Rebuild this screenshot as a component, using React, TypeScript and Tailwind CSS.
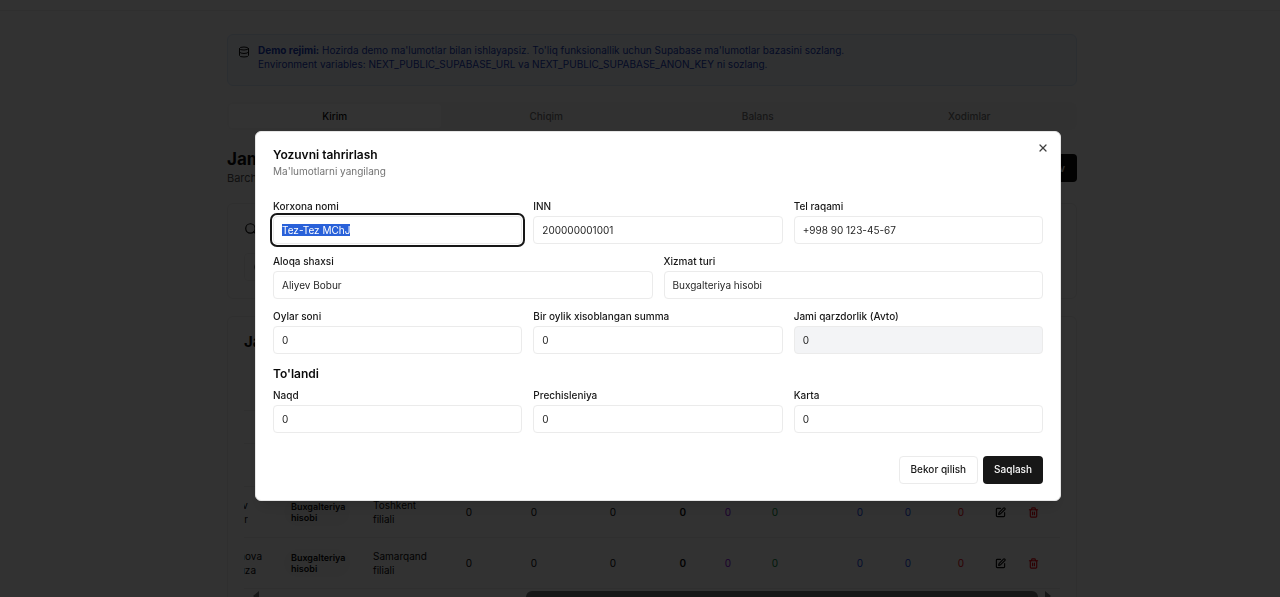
import { useEffect, useRef } from "react";
import { Database, Search, X, SquarePen, Trash2 } from "lucide-react";

type FieldProps = {
  id: string;
  label: string;
  value: string;
  readOnly?: boolean;
  selected?: boolean;
};

function Field({ id, label, value, readOnly, selected }: FieldProps) {
  const ref = useRef<HTMLInputElement>(null);
  useEffect(() => {
    if (selected) {
      ref.current?.focus();
      ref.current?.select();
    }
  }, [selected]);
  return (
    <div className="flex min-w-0 flex-col gap-[3px]">
      <label htmlFor={id} className="text-[10px] font-medium leading-[14px] text-neutral-900">
        {label}
      </label>
      <input
        id={id}
        ref={ref}
        defaultValue={value}
        readOnly={readOnly}
        className="h-7 w-full rounded border border-[#ebebeb] bg-white px-2 text-[10px] text-neutral-800 outline-neutral-900 selection:bg-[#2961d9] selection:text-white read-only:bg-gray-100 focus:outline-2 focus:outline-offset-1"
      />
    </div>
  );
}

const tabs = ["Kirim", "Chiqim", "Balans", "Xodimlar"];

const rows = [
  { first: "Aliyev", last: "Bobur", clip: "w-1", inset: "", branch: "Toshkent filiali" },
  { first: "Usmonova", last: "Feruza", clip: "w-[18px]", inset: "pr-[6px]", branch: "Samarqand filiali" },
];

const amounts = [
  "w-[29px] text-neutral-950",
  "w-[65px] text-neutral-950",
  "w-[79px] text-neutral-950",
  "w-[70px] font-semibold text-neutral-950",
  "w-[45px] text-purple-700",
  "w-[47px] text-green-700",
  "w-[85px] text-blue-700",
  "w-[48px] text-blue-700",
  "w-[53px] text-red-600",
];

function Page() {
  return (
    <div className="h-screen overflow-hidden bg-[#fafafa] pl-6">
      <div className="-ml-6 h-[11px] border-b border-[#ebebeb]" />
      <main className="mx-auto max-w-[850px] pt-[23px]">
        <div className="flex gap-2 rounded-md border border-[#d5e4f5] bg-[#eff5fb] px-[10px] pt-2 pb-3">
          <Database className="mt-[3px] size-3 shrink-0 text-neutral-950" />
          <p className="pb-[2px] text-[10px] leading-[14px] text-blue-800">
            <strong className="font-bold">Demo rejimi:</strong> Hozirda demo ma'lumotlar bilan ishlayapsiz. To'liq
            funksionallik uchun Supabase ma'lumotlar bazasini sozlang.
            <br />
            Environment variables: NEXT_PUBLIC_SUPABASE_URL va NEXT_PUBLIC_SUPABASE_ANON_KEY ni sozlang.
          </p>
        </div>

        <div role="tablist" className="mt-4 grid grid-cols-4 rounded-md bg-neutral-100 p-[2px]">
          {tabs.map((tab, i) => (
            <button
              key={tab}
              role="tab"
              aria-selected={i === 0}
              className="h-6 rounded text-[10px] font-medium text-neutral-500 aria-selected:bg-white aria-selected:text-neutral-950"
            >
              {tab}
            </button>
          ))}
        </div>

        <div className="mt-[19px] flex items-center justify-between">
          <div>
            <h2 className="text-[17px] leading-5 font-bold text-neutral-950">Jami kirimlar</h2>
            <p className="text-[11px] leading-[18px] text-neutral-600">Barcha kirim yozuvlari</p>
          </div>
          <button className="h-7 rounded bg-neutral-950 px-3 text-[10px] font-medium text-white">Yangi yozuv</button>
        </div>

        <section className="mt-4 rounded-md border border-[#ebebeb] px-4 pt-[18px] pb-[17px]">
          <Search className="size-[14px] text-neutral-950" />
          <div className="mt-[17px] h-7 rounded border border-[#ebebeb] px-2 py-2">
            <Search className="size-[11px] text-neutral-500" />
          </div>
        </section>

        <section className="mt-[17px] rounded-md border border-[#ebebeb] px-4 pt-[15px]">
          <h3 className="text-[15px] leading-5 font-bold text-neutral-950">Jami yozuvlar</h3>
          <div className="mt-[58px] overflow-hidden">
            <table className="w-full table-fixed border-collapse text-[10px] leading-[14px]">
              <thead>
                <tr className="h-[33px] border-y border-[#ebebeb]">
                  <th className="w-[30px]" />
                  <th className="w-[89px]" />
                  <th className="w-[83px]" />
                  {amounts.map((cell, i) => (
                    <th key={i} className={cell} />
                  ))}
                  <th />
                </tr>
              </thead>
              <tbody>
                <tr className="h-[43px] border-b border-[#ebebeb]">
                  <td colSpan={13} />
                </tr>
                {rows.map(({ first, last, clip, inset, branch }) => (
                  <tr key={branch} className="h-[51px] border-b border-[#ebebeb] text-neutral-950">
                    <td className="overflow-hidden">
                      <div className={clip + " flex flex-col items-end overflow-hidden"}>
                        <span>{first}</span>
                        <span className={inset}>{last}</span>
                      </div>
                    </td>
                    <td className="pl-[10px]">
                      <span className="block w-[66px] rounded-full bg-neutral-100 px-[7px] py-[3px] text-[9px] leading-[11px] font-semibold">
                        Buxgalteriya hisobi
                      </span>
                    </td>
                    <td className="pl-[10px]">
                      <span className="block w-[54px]">{branch}</span>
                    </td>
                    {amounts.map((cell, i) => (
                      <td key={i} className={cell + " pr-[3px] text-right"}>
                        0
                      </td>
                    ))}
                    <td>
                      <div className="flex justify-end gap-[22px] pr-[21px]">
                        <button aria-label="Tahrirlash">
                          <SquarePen className="size-[11px]" strokeWidth={2.5} />
                        </button>
                        <button aria-label="O'chirish" className="text-red-600">
                          <Trash2 className="size-[11px]" strokeWidth={2.5} />
                        </button>
                      </div>
                    </td>
                  </tr>
                ))}
              </tbody>
            </table>
            <div className="mt-[2px] flex h-3 items-start justify-between px-2">
              <svg viewBox="0 0 8 10" className="h-[10px] w-2 fill-neutral-500">
                <path d="M7 0v10L1 5z" />
              </svg>
              <div className="mr-[6px] ml-auto h-3 w-[64%] shrink-0 rounded-full bg-neutral-500" />
              <svg viewBox="0 0 8 10" className="h-[10px] w-2 fill-neutral-500">
                <path d="M1 0v10l6-5z" />
              </svg>
            </div>
          </div>
        </section>
      </main>
    </div>
  );
}

function EditDialog() {
  return (
    <div className="fixed inset-0 flex items-center justify-center bg-black/80 pt-[35px] pl-9">
      <div
        role="dialog"
        aria-modal="true"
        aria-labelledby="dialog-title"
        className="relative w-full max-w-[806px] rounded-md border border-neutral-200 bg-white px-[17px] pt-[15px] pb-4 shadow-lg"
      >
        <h2 id="dialog-title" className="text-[12px] leading-4 font-semibold text-neutral-950">
          Yozuvni tahrirlash
        </h2>
        <p className="mt-[1px] text-[10px] leading-[14px] text-neutral-500">Ma'lumotlarni yangilang</p>
        <form onSubmit={(e) => e.preventDefault()}>
          <div className="mt-[21px] flex flex-col gap-[10px]">
            <div className="grid grid-cols-3 gap-[11px]">
              <Field id="company" label="Korxona nomi" value="Tez-Tez MChJ" selected />
              <Field id="inn" label="INN" value="200000001001" />
              <Field id="phone" label="Tel raqami" value="+998 90 123-45-67" />
            </div>
            <div className="grid grid-cols-2 gap-[11px]">
              <Field id="contact" label="Aloqa shaxsi" value="Aliyev Bobur" />
              <Field id="service" label="Xizmat turi" value="Buxgalteriya hisobi" />
            </div>
            <div className="grid grid-cols-3 gap-[11px]">
              <Field id="months" label="Oylar soni" value="0" />
              <Field id="monthly" label="Bir oylik xisoblangan summa" value="0" />
              <Field id="debt" label="Jami qarzdorlik (Avto)" value="0" readOnly />
            </div>
          </div>
          <h3 className="mt-3 text-[12px] leading-4 font-semibold text-neutral-950">To'landi</h3>
          <div className="mt-[6px] grid grid-cols-3 gap-[11px]">
            <Field id="cash" label="Naqd" value="0" />
            <Field id="transfer" label="Prechisleniya" value="0" />
            <Field id="card" label="Karta" value="0" />
          </div>
          <div className="mt-[23px] flex justify-end gap-[5px]">
            <button
              type="button"
              className="h-7 rounded border border-[#ebebeb] bg-white px-[11px] pb-[2px] text-[10px] font-medium text-neutral-900"
            >
              Bekor qilish
            </button>
            <button
              type="submit"
              className="h-7 rounded bg-neutral-900 px-[11px] pb-[2px] text-[10px] font-medium text-neutral-50"
            >
              Saqlash
            </button>
          </div>
        </form>
        <button aria-label="Yopish" className="absolute top-[10px] right-[11px] text-neutral-700">
          <X className="size-3" strokeWidth={2.5} />
        </button>
      </div>
    </div>
  );
}

export default function App() {
  return (
    <div className="font-['Inter',sans-serif]">
      <Page />
      <EditDialog />
    </div>
  );
}
